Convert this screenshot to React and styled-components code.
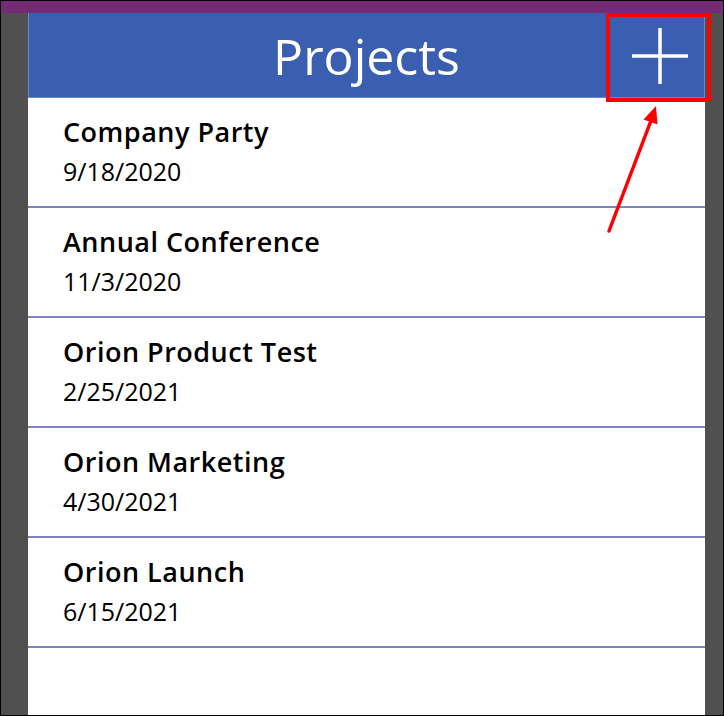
import React from "react";
import styled, { createGlobalStyle } from "styled-components";

const Global = createGlobalStyle`
  html, body { margin: 0; padding: 0; background: #ffffff; }
  body { font-family: "Open Sans", "Noto Sans", sans-serif; }
  * { box-sizing: border-box; }
`;

const Frame = styled.div`
  position: relative;
  width: 724px;
  height: 716px;
  border: 1px solid #000000;
  display: flex;
  flex-direction: column;
  overflow: hidden;
  background: #505050;
`;

const TopBand = styled.div`
  height: 12px;
  flex: none;
  background: #742a74;
`;

const Stage = styled.div`
  flex: 1;
  display: flex;
  padding-left: 27px;
  padding-right: 18px;
  background: #505050;
`;

const Screen = styled.div`
  flex: 1;
  display: flex;
  flex-direction: column;
  background: #ffffff;
`;

const Header = styled.header`
  height: 85px;
  flex: none;
  display: grid;
  grid-template-columns: 1fr auto 1fr;
  align-items: center;
  background: #3a5fb1;
  box-shadow: inset 1px 0 0 #6686cf, inset -1px 0 0 #6686cf, inset 0 -1px 0 #6686cf;
`;

const Title = styled.h1`
  grid-column: 2;
  margin: 0;
  font-family: "Open Sans", sans-serif;
  font-weight: 400;
  font-size: 50px;
  color: #ffffff;
  line-height: 84px;
`;

const AddButton = styled.button`
  grid-column: 3;
  justify-self: end;
  width: 90px;
  height: 84px;
  border: none;
  background: transparent;
  padding: 0;
  display: flex;
  align-items: center;
  justify-content: center;
`;

const List = styled.ul`
  list-style: none;
  margin: 0;
  padding: 0;
`;

const Row = styled.li`
  height: 110px;
  padding: 15px 0 0 35px;
  border-bottom: 2px solid #7d84be;
`;

const Name = styled.div`
  font-family: "Open Sans", sans-serif;
  font-weight: 600;
  font-size: 27px;
  letter-spacing: 0.5px;
  line-height: 38px;
  color: #000000;
`;

const DateText = styled.div`
  margin-top: 3px;
  font-family: "Open Sans", sans-serif;
  font-weight: 400;
  font-size: 25px;
  line-height: 34px;
  color: #000000;
`;

const Highlight = styled.div`
  position: absolute;
  left: 605px;
  top: 12px;
  width: 105px;
  height: 89px;
  border: 4px solid #ff0000;
  pointer-events: none;
`;

const ArrowLayer = styled.svg`
  position: absolute;
  left: -1px;
  top: -1px;
  pointer-events: none;
`;

const projects = [
  { name: "Company Party", date: "9/18/2020" },
  { name: "Annual Conference", date: "11/3/2020" },
  { name: "Orion Product Test", date: "2/25/2021" },
  { name: "Orion Marketing", date: "4/30/2021" },
  { name: "Orion Launch", date: "6/15/2021" },
];

export default function App() {
  return (
    <>
      <Global />
      <Frame>
        <TopBand />
        <Stage>
          <Screen>
            <Header>
              <Title>Projects</Title>
              <AddButton aria-label="Add project">
                <svg width="56" height="56" viewBox="0 0 56 56">
                  <line x1="0" y1="28" x2="56" y2="28" stroke="#ffffff" strokeWidth="3.5" />
                  <line x1="28" y1="0" x2="28" y2="56" stroke="#ffffff" strokeWidth="3.5" />
                </svg>
              </AddButton>
            </Header>
            <List>
              {projects.map((p) => (
                <Row key={p.name}>
                  <Name>{p.name}</Name>
                  <DateText>{p.date}</DateText>
                </Row>
              ))}
            </List>
          </Screen>
        </Stage>
        <Highlight />
        <ArrowLayer width="724" height="716" viewBox="0 0 724 716">
          <line x1="609" y1="231" x2="652" y2="118" stroke="#ff0000" strokeWidth="3.5" strokeLinecap="round" />
          <polygon points="656,106 657.5,124.5 643.5,119.5" fill="#ff0000" />
        </ArrowLayer>
      </Frame>
    </>
  );
}
